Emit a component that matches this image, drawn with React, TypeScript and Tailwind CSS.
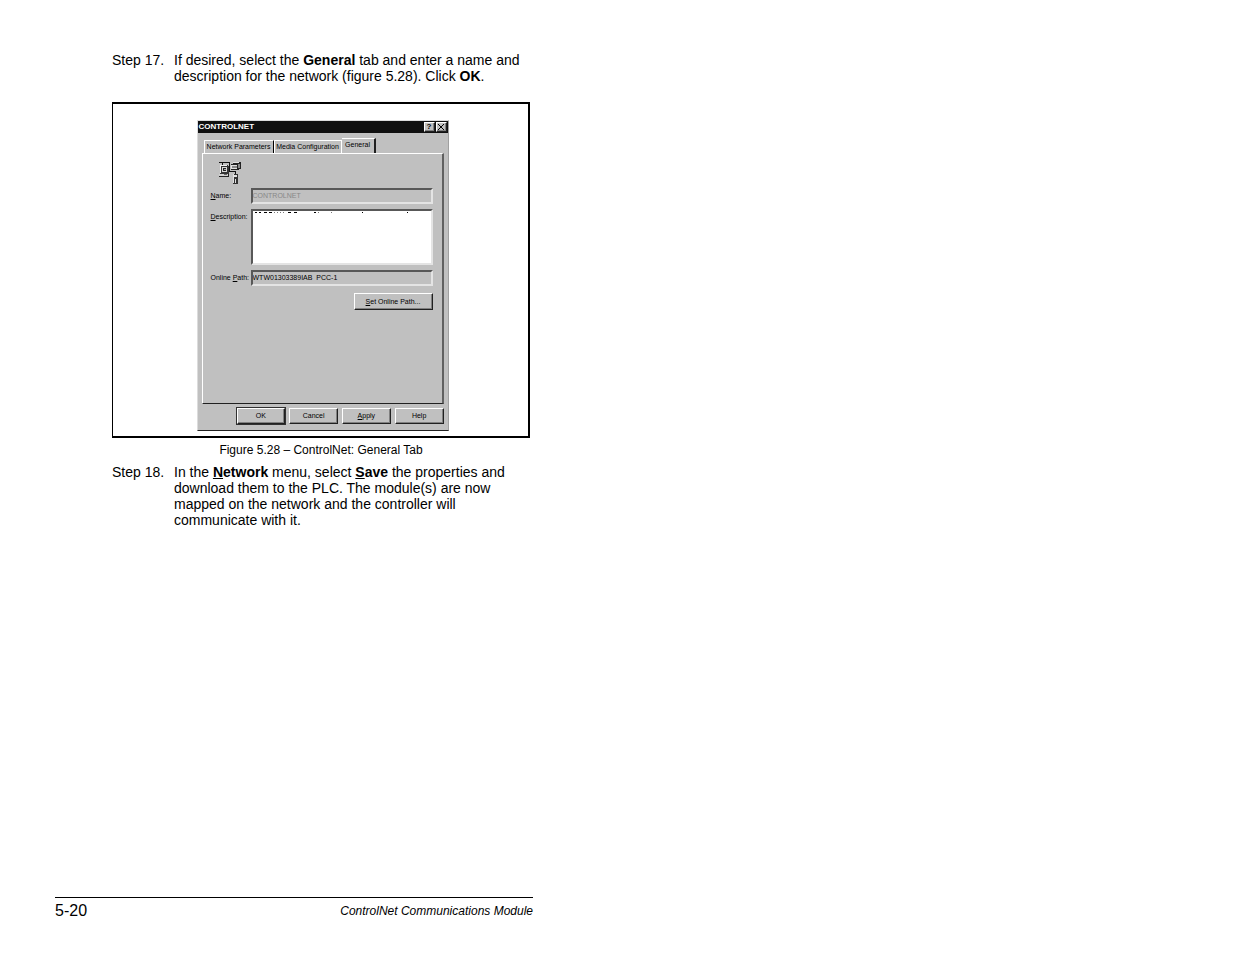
import type { ReactNode } from "react";

const raised = "border border-t-white border-l-white border-r-[#202020] border-b-[#202020] shadow-[inset_-1px_-1px_0_#808080]";
const sunken = "border-2 border-t-[#585858] border-l-[#585858] border-r-[#e4e4e4] border-b-[#e4e4e4] rounded-none";

function Step({ n, children }: { n: number; children: ReactNode }) {
  return (
    <div className="flex text-[14px] leading-4">
      <span className="w-[62px] shrink-0">Step {n}.</span>
      <p className="flex-1">{children}</p>
    </div>
  );
}

function NetworkIcon() {
  return (
    <svg className="block h-6 w-6" viewBox="0 0 24 24" shapeRendering="crispEdges" aria-hidden="true">
      {/* cable */}
      <path d="M1 1h11v1H1zM4 2h1v2H4zM11 2h1v9h-1zM11 10h7v1h-7zM17 11h1v3h-1z" fill="#111" />
      {/* left computer */}
      <path d="M2 4h8v1h1v8H2z" fill="#333" />
      <path d="M2 4h7v1H3v7H2z" fill="#f0f0f0" />
      <path d="M4 6h5v5H4z" fill="#d8d8d8" />
      <path d="M5 7h3v3H5z" fill="#222" />
      <path d="M6 8h2v1H6z" fill="#aaa" />
      <path d="M1 13h10v3H1z" fill="#222" />
      <path d="M1 13h9v2H1z" fill="#d0d0d0" />
      <path d="M6 13h3v1H6z" fill="#666" />
      {/* right box */}
      <path d="M15 1h8v7h-2v1h-8V3h2z" fill="#222" />
      <path d="M15 1h6v1h-6zM13 4h6v4h-6z" fill="#e0e0e0" />
      <path d="M14 5h5v2h-5zM20 3h2v4h-2z" fill="#888" />
      {/* handheld unit */}
      <path d="M15 13h5v10h-5z" fill="#333" />
      <path d="M15 13h1v9h-1zM16 14h3v2h-3zM17 18h1v4h-1z" fill="#e0e0e0" />
    </svg>
  );
}

function DialogButton({ children, primary }: { children: ReactNode; primary?: boolean }) {
  return (
    <button className={`h-4 flex-1 bg-[#c0c0c0] leading-3 ${raised} ${primary ? "outline outline-1 outline-[#303030]" : ""}`}>
      {children}
    </button>
  );
}

function ControlNetDialog() {
  return (
    <section className="w-[252px] border border-t-[#dcdcdc] border-l-[#dcdcdc] border-r-[#a0a0a0] border-b-[#202020] bg-[#c0c0c0] pb-[6px] text-[7px] leading-3 text-black">
      <header className="flex h-3 items-center bg-[#101010] px-px text-[8px] text-white">
        <h2 className="flex-1 font-bold">CONTROLNET</h2>
        <button aria-label="Help" className={`flex h-[10px] w-[11px] items-center justify-center bg-[#c0c0c0] font-bold text-black ${raised}`}>?</button>
        <button aria-label="Close" className={`ml-px flex h-[10px] w-[11px] items-center justify-center bg-[#c0c0c0] text-black ${raised}`}>
          <svg className="h-[6px] w-[6px]" viewBox="0 0 6 6" aria-hidden="true">
            <path d="M0 0l6 6M6 0l-6 6" stroke="#000" />
          </svg>
        </button>
      </header>

      <div role="tablist" className="mt-[5px] flex items-end px-[6px] whitespace-nowrap">
        <button role="tab" aria-selected="false" className="h-[13px] w-[70px] border-t border-r border-l border-t-white border-r-black border-l-white">Network Parameters</button>
        <button role="tab" aria-selected="false" className="h-[13px] w-[68px] border-t border-r border-l border-t-white border-r-white border-l-white">Media Configuration</button>
        <button role="tab" aria-selected="true" className="h-[15px] w-[34px] border-t border-r-2 border-t-white border-r-[#202020] pb-[2px]">General</button>
      </div>

      <div role="tabpanel" className="mx-1 h-[251px] border border-t-white border-r-2 border-r-[#606060] border-b-[#202020] border-l-white pt-[7px] pr-[9px] pl-2">
        <div className="pl-[7px]"><NetworkIcon /></div>
        <div className="mt-[3px] flex items-center">
          <label htmlFor="name" className="w-10 shrink-0"><u>N</u>ame:</label>
          <input id="name" disabled defaultValue="CONTROLNET" className={`h-4 min-w-0 flex-1 bg-[#c0c0c0] pb-[2px] text-[#888] ${sunken}`} />
        </div>
        <div className="mt-[5px] flex">
          <label htmlFor="description" className="w-10 shrink-0 pt-[2px]"><u>D</u>escription:</label>
          <div className="relative flex flex-1">
            <textarea id="description" className={`h-14 min-w-0 flex-1 resize-none bg-white ${sunken}`} />
            {/* bottom edge of the line scrolled out of view */}
            <svg className="pointer-events-none absolute top-[3px] left-[3px] h-px w-40" viewBox="0 0 160 1" shapeRendering="crispEdges" aria-hidden="true">
              <path d="M1 .5h2M5 .5h2M10 .5h3M15 .5h3M34 .5h3M40 .5h3M60 .5h2M108 .5h1M153 .5h1" stroke="#000" />
              <path d="M20 .5h1M23 .5h1M26 .5h1M29 .5h1M64 .5h1M77 .5h1" stroke="#777" />
            </svg>
          </div>
        </div>
        <div className="mt-[5px] flex items-center">
          <label htmlFor="path" className="w-10 shrink-0 whitespace-nowrap">Online <u>P</u>ath:</label>
          <input id="path" readOnly defaultValue="WTW01303389IAB_PCC-1" className={`h-4 min-w-0 flex-1 bg-[#c0c0c0] pb-[2px] ${sunken}`} />
        </div>
        <div className="mt-[7px] flex justify-end">
          <button className={`h-[17px] w-[79px] ${raised}`}><u>S</u>et Online Path...</button>
        </div>
      </div>

      <footer className="mt-1 flex gap-1 pr-1 pl-[39px]">
        <DialogButton primary>OK</DialogButton>
        <DialogButton>Cancel</DialogButton>
        <DialogButton><u>A</u>pply</DialogButton>
        <DialogButton>Help</DialogButton>
      </footer>
    </section>
  );
}

export default function App() {
  return (
    <div className="min-h-screen bg-white font-['Liberation_Sans',Arial,sans-serif] text-black">
      <div className="flex min-h-screen max-w-[533px] flex-col pt-[52px] pb-[34px] pl-[55px]">
        <main className="flex-1 pr-[3px] pl-[57px]">
          <Step n={17}>
            If desired, select the <b>General</b> tab and enter a name and description for the network (figure 5.28). Click <b>OK</b>.
          </Step>
          <figure className="mt-[18px]">
            <div className="flex justify-center border-2 border-l border-black pt-4 pb-[5px] pl-1">
              <ControlNetDialog />
            </div>
            <figcaption className="mt-1 text-center text-[12px] leading-4">Figure 5.28 – ControlNet: General Tab</figcaption>
          </figure>
          <div className="mt-[6px]">
            <Step n={18}>
              In the <b><u>N</u>etwork</b> menu, select <b><u>S</u>ave</b> the properties and download them to the PLC. The module(s) are now mapped on the network and the controller will communicate with it.
            </Step>
          </div>
        </main>
        <footer className="flex items-center justify-between border-t border-black pt-1">
          <span className="text-[16px] leading-[18px]">5-20</span>
          <span className="text-[12px] leading-[18px] italic">ControlNet Communications Module</span>
        </footer>
      </div>
    </div>
  );
}
